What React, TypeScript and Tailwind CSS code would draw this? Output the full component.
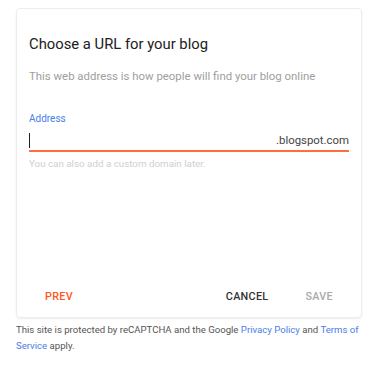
export default function App() {
  return (
    <div className="w-[375px] h-[366px] bg-white font-['Roboto',_'Liberation_Sans',_sans-serif]">
      <div className="pt-2 pl-4 pr-[13px]">
        <div className="h-[310px] flex flex-col rounded border border-[#ececec] shadow-[0_1px_2px_rgba(0,0,0,0.08)] px-[12px]">
          <h1 className="mt-[25px] text-[14.8px] leading-5 text-[#212121]">Choose a URL for your blog</h1>
          <p className="mt-[14px] text-[11.4px] leading-4 text-[#9e9e9e]">
            This web address is how people will find your blog online
          </p>
          <label className="mt-[27px] text-[10px] leading-4 text-[#4a7ee8]">Address</label>
          <div className="mt-[5px] flex items-end border-b-2 border-[#ff6e40] pb-[2px]">
            <span className="w-px h-[15px] bg-[#212121]" />
            <span className="ml-auto text-[11.4px] leading-4 text-[#444]">.blogspot.com</span>
          </div>
          <p className="mt-[6px] text-[9.8px] leading-3 text-[#cfcfcf]">You can also add a custom domain later.</p>
          <div className="mt-auto mb-[12px] flex items-center text-[10.8px] font-medium leading-4 tracking-[0.3px]">
            <button className="ml-[16px] text-[#ff5722]">PREV</button>
            <button className="ml-auto text-[#333]">CANCEL</button>
            <button className="ml-[37px] mr-[16px] text-[#aaa]">SAVE</button>
          </div>
        </div>
      </div>
      <p className="mt-[4px] px-4 text-[9.6px] leading-4 text-[#555]">
        This site is protected by reCAPTCHA and the Google{' '}
        <a className="text-[#4a7ee8]">Privacy Policy</a> and{' '}
        <a className="text-[#4a7ee8]">Terms of Service</a> apply.
      </p>
    </div>
  );
}
